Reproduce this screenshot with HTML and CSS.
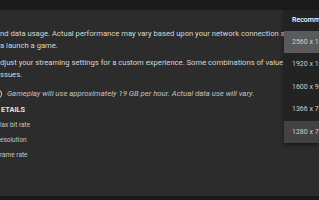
FILE: index.html
```html
<!DOCTYPE html>
<html lang="en">
<head>
    <meta charset="UTF-8">
    <meta name="viewport" content="width=device-width, initial-scale=1.0">
    <title>Streaming quality</title>
    <link rel="stylesheet" href="styles.css">
</head>
<body>
    <div class="pagina">
        <header class="topo"></header>

        <main class="conteudo">
            <p class="texto">nd data usage. Actual performance may vary based upon your network connection a<br>a launch a game.</p>

            <p class="texto">djust your streaming settings for a custom experience. Some combinations of value<br>ssues.</p>

            <p class="aviso">
                <svg class="icone" viewBox="0 0 3 10" width="3" height="10">
                    <circle cx="-2" cy="5" r="3.6" fill="none" stroke="#bdbdbd" stroke-width="1.1"/>
                </svg>
                Gameplay will use approximately 19 GB per hour. Actual data use will vary.
            </p>

            <h3 class="titulo">ETAILS</h3>
            <ul class="detalhes">
                <li>lax bit rate</li>
                <li>esolution</li>
                <li>rame rate</li>
            </ul>
        </main>

        <footer class="rodape"></footer>
    </div>

    <!-- menu de resoluções aberto -->
    <div class="menu">
        <div class="menu-topo">Recomm</div>
        <div class="item selecionado">2560 x 1</div>
        <div class="item">1920 x 1</div>
        <div class="item">1600 x 9</div>
        <div class="item">1366 x 7</div>
        <div class="item hover">1280 x 7</div>
    </div>
</body>
</html>
```

FILE: styles.css
```css
* {
    box-sizing: border-box;
    padding: 0;
    margin: 0;
}

body {
    background-color: #2c2c2c;
    font-family: Roboto, "Liberation Sans", sans-serif;
    color: #d6d6d6;
    width: 319px;
    height: 200px;
    overflow: hidden;
    position: relative;
}

.pagina {
    display: flex;
    flex-direction: column;
    height: 200px;
}

.topo {
    height: 10px;
    background-color: #1b1b1b;
}

.conteudo {
    flex: 1;
    padding-top: 18.25px;
    white-space: nowrap;
}

.texto {
    font-size: 7.65px;
    line-height: 11.5px;
    margin-bottom: 6px;
}

.aviso {
    font-size: 7.75px;
    line-height: 11.5px;
    font-style: italic;
    color: #c2c2c2;
    display: flex;
    align-items: center;
    gap: 4px;
    margin-top: 8px;
}

.titulo {
    font-size: 7.4px;
    line-height: 11.5px;
    font-weight: bold;
    color: #e2e2e2;
    margin-top: 4.5px;
    padding-left: 1px;
}

.detalhes {
    list-style: none;
    font-size: 6.5px;
    color: #c4c4c4;
    margin-top: 1.75px;
}

.detalhes li {
    line-height: 15px;
}

.rodape {
    height: 4px;
    background-color: #1a1a1a;
}

.menu {
    position: absolute;
    top: 10px;
    left: 284px;
    width: 35px;
    height: 133px;
    background-color: #232323;
    box-shadow: 0 2px 4px rgba(0, 0, 0, 0.5);
    font-size: 7px;
    white-space: nowrap;
    overflow: hidden;
}

.menu-topo {
    height: 20.5px;
    line-height: 20.5px;
    padding-left: 8px;
    color: #ffffff;
    font-weight: 500;
}

.item {
    height: 22.5px;
    line-height: 22.5px;
    padding-left: 8px;
    color: #cfcfcf;
}

.item.selecionado {
    background-color: #5a5a5a;
}

.item.hover {
    background-color: #424242;
}
```
